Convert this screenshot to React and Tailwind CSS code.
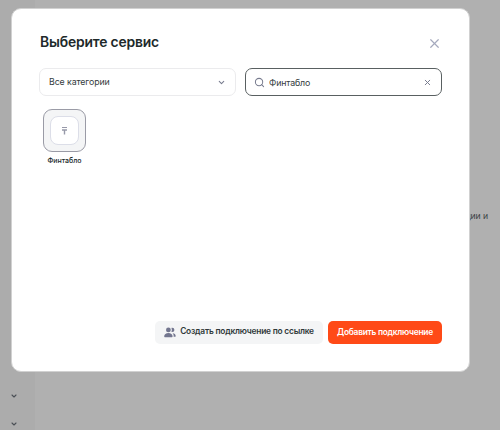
import { ChevronDown, Search, X } from "lucide-react"

function UsersIcon() {
  return (
    <svg width="12" height="11" viewBox="0 0 12 11" fill="#73768f" className="shrink-0">
      <circle cx="4.4" cy="2.9" r="2.4" />
      <path d="M0.2 9.3C0.2 7.4 2 6.1 4.4 6.1s4.2 1.3 4.2 3.2c0 .6-.4 1-1 1H1.2c-.6 0-1-.4-1-1z" />
      <path d="M7.4 1c.3-.1.6-.2.9-.2a2.1 2.1 0 0 1 0 4.2c-.3 0-.6-.1-.9-.2.6-1.2.6-2.6 0-3.8z" />
      <path d="M8.6 6.3c1.9.2 3.1 1.2 3.1 2.6 0 .5-.3.9-.9.9H9.6c.2-1.4-.1-2.5-1-3.5z" />
    </svg>
  )
}

function ServiceCard({ name }) {
  return (
    <div className="flex w-[43px] flex-col items-center">
      <div className="flex h-[43px] w-[43px] items-center justify-center rounded-[9px] border border-[#9a9ba6] bg-[#f4f5f6]">
        <div className="flex h-[29px] w-[29px] items-center justify-center rounded-[8px] border border-[#dcdee8] bg-white">
          <svg width="7" height="9" viewBox="0 0 7 9" fill="none" stroke="#9799a9">
            <path d="M1 1.5h5" strokeWidth="1" />
            <path d="M1 4h5M3.5 4v4.5" strokeWidth="1.4" />
          </svg>
        </div>
      </div>
      <span className="mt-[4px] text-[7px] leading-[10px] font-medium whitespace-nowrap text-[#20292a]">{name}</span>
    </div>
  )
}

export default function App() {
  return (
    <div className="relative flex h-[430px] w-[500px] overflow-hidden bg-[#b0b0b0] font-['Inter',sans-serif]">
      <aside className="flex w-[35px] flex-col items-center justify-end gap-[20px] bg-[#acacac] pr-[7px] pb-[2px]">
        <ChevronDown size={8} strokeWidth={3.2} className="text-[#4a4f55]" />
        <ChevronDown size={8} strokeWidth={3.2} className="text-[#4a4f55]" />
      </aside>
      <main className="flex-1 pt-[210px] pr-[12px] text-right text-[8.7px] leading-[12px] tracking-[-0.1px] text-[#3c4245]">
        функции и
      </main>

      {/* Service picker dialog */}
      <div
        role="dialog"
        className="absolute top-[8px] left-[11px] flex h-[364px] w-[459px] flex-col rounded-[10px] border border-[#d1d1d1] bg-white px-[27px] pt-[24px] pb-[27px]"
      >
        <div className="flex h-[20px] items-center justify-between pl-[1px]">
          <h2 className="pb-[2px] text-[13.9px] leading-[18px] font-semibold tracking-[-0.18px] text-[#20292a]">
            Выберите сервис
          </h2>
          <button aria-label="Закрыть">
            <X size={15} strokeWidth={1.9} className="text-[#a5a9bd]" />
          </button>
        </div>

        <div className="mt-[15px] flex gap-[9px]">
          <button className="flex h-[28px] w-[197px] items-center justify-between rounded-[7px] border border-[#ebebed] pr-[9px] pl-[9px] text-[8.8px] tracking-[-0.1px] text-[#343c3d]">
            Все категории
            <ChevronDown size={9} strokeWidth={2.8} className="text-[#777b8e]" />
          </button>
          <div className="flex h-[28px] w-[197px] items-center rounded-[7px] border border-[#596061] pr-[9px] pl-[8px]">
            <Search size={11} strokeWidth={2.2} className="shrink-0 text-[#777b8e]" />
            <input
              defaultValue="Финтабло"
              className="ml-[4px] min-w-0 flex-1 bg-transparent pt-[1px] text-[8.8px] leading-[14px] tracking-[-0.15px] text-[#343c3d] outline-none"
            />
            <X size={9} strokeWidth={2.6} className="shrink-0 text-[#777b8e]" />
          </div>
        </div>

        <div className="mt-[13px] flex flex-1 items-start pl-[4px]">
          <ServiceCard name="Финтабло" />
        </div>

        <div className="flex justify-end gap-[5px]">
          <button className="flex h-[23px] w-[168px] items-center justify-center gap-[4px] rounded-[5px] bg-[#f4f5f6] text-[8.4px] font-semibold tracking-[-0.22px] whitespace-nowrap text-[#30393a]">
            <UsersIcon />
            <span className="pb-[2px]">Создать подключение по ссылке</span>
          </button>
          <button className="h-[23px] w-[114px] rounded-[5px] bg-[#ff4a17] text-[8.4px] font-semibold tracking-[-0.26px] whitespace-nowrap text-white">
            Добавить подключение
          </button>
        </div>
      </div>
    </div>
  )
}
